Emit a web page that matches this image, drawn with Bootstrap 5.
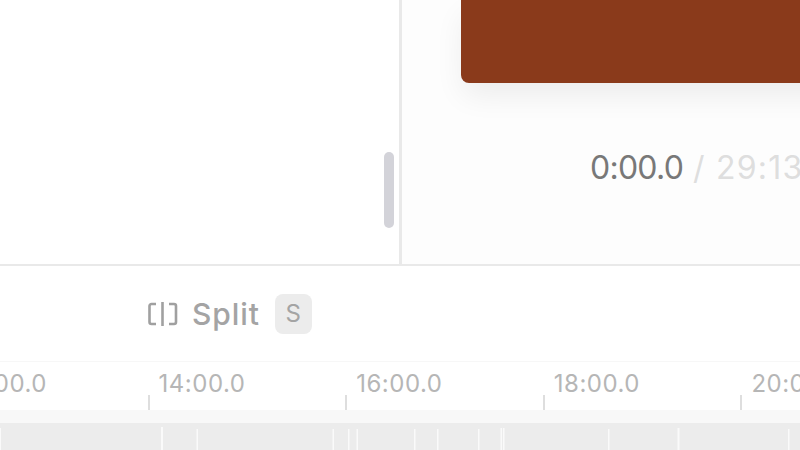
<!DOCTYPE html>
<html lang="en">
<head>
<meta charset="utf-8">
<title>Editor</title>
<link href="https://cdn.jsdelivr.net/npm/bootstrap@5.3.0/dist/css/bootstrap.min.css" rel="stylesheet">
<style>
html, body { height: 100%; overflow: hidden; background: #fff; font-family: Inter, "Liberation Sans", sans-serif; }
.app-shell { width: 800px; height: 450px; }
.top-area { height: 266px; border-bottom: 2px solid #e9e9e9; }
.side-pane { width: 402px; border-right: 3px solid #e9e9e9; padding: 152px 5px 0 0; background: #fff; }
.side-thumb { width: 10px; height: 76px; border-radius: 5px; background: #d3d3d9; }
.stage-pane { background: #fdfdfd; padding-left: 59px; }
.video-frame { width: 500px; height: 83px; flex: none; background: #8a3a1b; border-radius: 0 0 0 8px; box-shadow: 0 14px 30px -2px rgba(0,0,0,.07); }
.clock-row { margin: 65px 0 0 129px; font-size: 32px; line-height: 40px; white-space: nowrap; }
.clock-now { color: #787878; letter-spacing: -.75px; }
.clock-end { color: #dedede; margin-left: 1px; letter-spacing: 1.2px; }
.tool-row { height: 96px; padding-left: 148px; border-bottom: 1px solid #f7f7f7; color: #a4a4a4; }
.split-label { font-size: 30px; font-weight: 500; margin-left: 14px; line-height: 1; letter-spacing: .9px; }
.key-cap { width: 37px; height: 40px; margin-left: 15px; border-radius: 8px; background: #ececec; font-size: 24px; color: #a4a4a4; }
.ruler-row { height: 48px; margin-left: -50px; width: 1100px; }
.ruler-cell { flex: 0 0 197.6px; position: relative; padding: 7px 0 0 11px; font-size: 24px; line-height: 30px; letter-spacing: .5px; color: #b6b6b6; }
.ruler-cell::after { content: ""; position: absolute; left: 0; bottom: 0; width: 2px; height: 15px; background: #dedede; }
.strip-row { height: 13px; background: #f8f8f8; }
.wave-row { height: 27px; background: #ececec; }
.wave-row svg { display: block; }
</style>
</head>
<body>
<div class="app-shell d-flex flex-column overflow-hidden">
  <div class="top-area d-flex flex-shrink-0">
    <div class="side-pane d-flex justify-content-end flex-shrink-0">
      <div class="side-thumb"></div>
    </div>
    <div class="stage-pane flex-grow-1 overflow-hidden">
      <div class="video-frame"></div>
      <div class="clock-row"><span class="clock-now">0:00.0</span> <span class="clock-end">/ 29:13</span></div>
    </div>
  </div>
  <div class="tool-row d-flex align-items-center flex-shrink-0">
    <svg width="30" height="24" viewBox="0 0 30 24" fill="none" stroke="#a0a0a0" stroke-width="2.600" aria-hidden="true">
      <path d="M8 2H3.500A2 2 0 0 0 1.500 4V20A2 2 0 0 0 3.500 22H8"/>
      <path d="M21 2H26A2 2 0 0 1 28 4V20A2 2 0 0 1 26 22H21"/>
      <path d="M14.500 0V24"/>
    </svg>
    <span class="split-label">Split</span>
    <span class="key-cap d-flex align-items-center justify-content-center">S</span>
  </div>
  <div class="ruler-row d-flex flex-shrink-0">
    <div class="ruler-cell">12:00.0</div>
    <div class="ruler-cell">14:00.0</div>
    <div class="ruler-cell">16:00.0</div>
    <div class="ruler-cell">18:00.0</div>
    <div class="ruler-cell">20:00.0</div>
  </div>
  <div class="strip-row flex-shrink-0"></div>
  <div class="wave-row flex-shrink-0">
    <svg width="800" height="27" viewBox="0 0 800 27" fill="#fafafa" aria-hidden="true">
      <rect x="0" y="5" width="1" height="22"/>
      <rect x="161" y="4" width="2" height="23"/>
      <rect x="196.500" y="6" width="1.500" height="21"/>
      <rect x="332.500" y="6" width="1.500" height="21"/>
      <rect x="348" y="6" width="1.500" height="21"/>
      <rect x="356.500" y="6" width="1.500" height="21"/>
      <rect x="414" y="6" width="1.500" height="21"/>
      <rect x="437" y="6" width="1.500" height="21"/>
      <rect x="478" y="6" width="1.500" height="21"/>
      <rect x="500.500" y="5" width="1.500" height="22"/>
      <rect x="503" y="5" width="1.500" height="22"/>
      <rect x="608" y="6" width="1.500" height="21"/>
      <rect x="677.500" y="5" width="2" height="22"/>
      <rect x="788" y="6" width="1.500" height="21"/>
    </svg>
  </div>
</div>
<script src="https://cdn.jsdelivr.net/npm/bootstrap@5.3.0/dist/js/bootstrap.bundle.min.js"></script>
</body>
</html>
